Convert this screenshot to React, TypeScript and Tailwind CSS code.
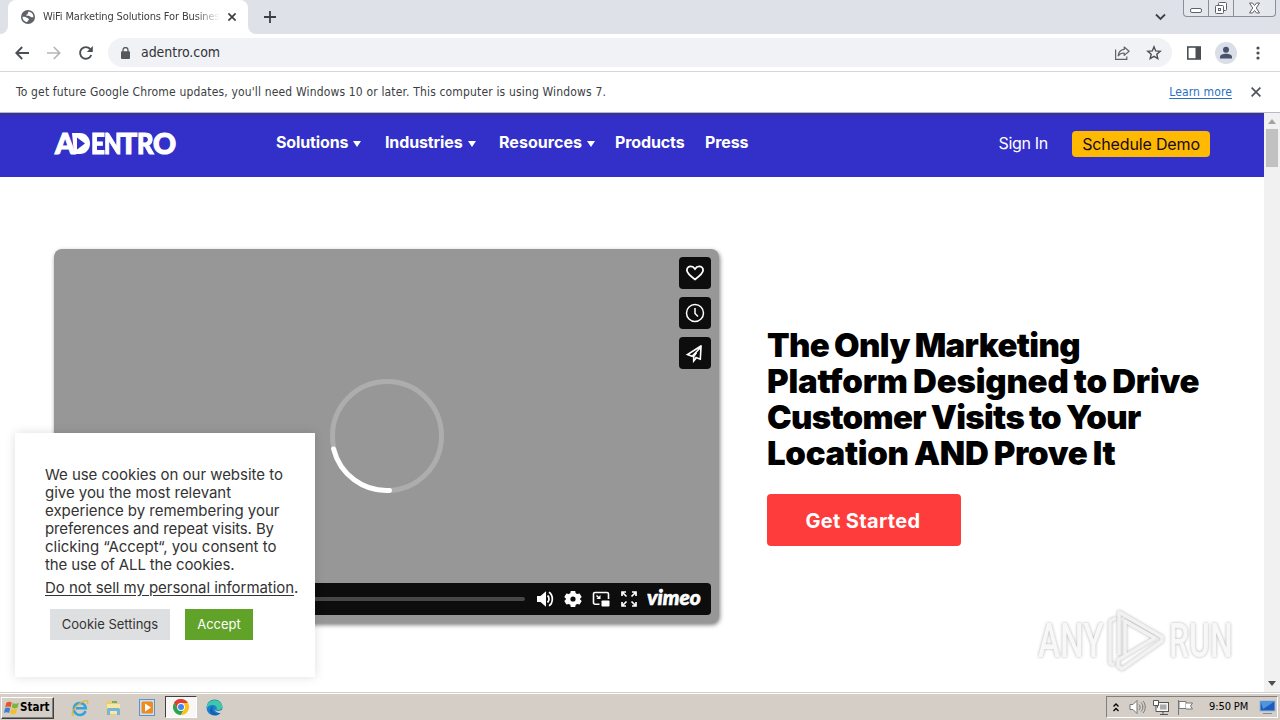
import React from "react";

const UI = "font-['DejaVu_Sans_Condensed','DejaVu_Sans',sans-serif]";

function Globe() {
  return (
    <svg className="size-[14px]" viewBox="0 0 14 14">
      <circle cx="7" cy="7" r="7" fill="#5f6368" />
      <path d="M1.600 6.800c1.500-.4 3.400.2 4.400.9.900.7 1.900.6 1.900 1.500 0 1-1.300 1.200-1.600 2.900C3.500 12 1.500 9.700 1.600 6.800z M7 1.600c.9.600-.2 1.300-.3 2.100-.1.900-1.400.6-1.500 1.500 0 .8 1.500.5 2.600.6 1.200.2 1.500 1.500 3 1.500.9 0 1.500-.3 1.600-.9C12.200 3.700 10 1.700 7 1.600z" fill="#fff" />
    </svg>
  );
}

function TabStrip() {
  return (
    <div className="flex h-[34px] shrink-0 bg-[#dee1e8]">
      <div className="w-[8px] bg-white">
        <div className="h-[34px] rounded-br-[8px] bg-[#dee1e8]" />
      </div>
      <div className="flex w-[240px] items-center rounded-t-[8px] bg-white pl-[13px]">
        <Globe />
        <div className={`ml-[8px] w-[177px] overflow-hidden whitespace-nowrap text-[11px] tracking-[-0.13px] text-[#3c4043] [mask-image:linear-gradient(to_right,#000_152px,transparent_177px)] ${UI}`}>
          WiFi Marketing Solutions For Business
        </div>
        <svg className="ml-[8px] size-[8px]" viewBox="0 0 8 8">
          <path d="M.4.400l7.200 7.200M7.600.400L.4 7.600" stroke="#3c4043" strokeWidth="1.700" />
        </svg>
      </div>
      <div className="w-[8px] bg-white">
        <div className="h-[34px] rounded-bl-[8px] bg-[#dee1e8]" />
      </div>
      <svg className="mt-[11px] ml-[8px] size-[12px]" viewBox="0 0 12 12">
        <path d="M6 0v12M0 6h12" stroke="#3c4043" strokeWidth="1.800" />
      </svg>
      <svg className="mt-[13px] ml-auto h-[8px] w-[11px]" viewBox="0 0 11 8">
        <path d="M1 1.500l4.500 4.500L10 1.500" fill="none" stroke="#3c4043" strokeWidth="1.800" />
      </svg>
      <div className="mr-[4px] ml-[17px] flex h-[17px] w-[93px] rounded-b-[4px] border border-t-0 border-[#8a8e98] bg-[#e4e7ec]">
        <div className="flex w-[25px] justify-center border-r border-[#8a8e98] pt-[8px]">
          <div className="h-[5px] w-[12px] rounded-[2px] border border-[#5c616c] bg-white" />
        </div>
        <div className="flex w-[25px] justify-center border-r border-[#8a8e98]">
          <svg className="mt-[1px] size-[14px]" viewBox="0 0 14 14" fill="#fff" stroke="#5c616c">
            <rect x="4.500" y="1.500" width="8" height="8" rx="1" />
            <rect x="1.500" y="4.500" width="8" height="8" rx="1" />
            <rect x="4.500" y="7.500" width="2" height="2" />
          </svg>
        </div>
        <div className="flex flex-1 justify-center">
          <svg className="mt-[2px] h-[12px] w-[13px]" viewBox="0 0 13 12">
            <path d="M1.500 1h3l2 2.500L8.500 1h3L8.300 6l3.200 5h-3l-2-2.500L4.500 11h-3l3.200-5z" fill="#fff" stroke="#5c616c" />
          </svg>
        </div>
      </div>
    </div>
  );
}

function Toolbar() {
  return (
    <div className="flex h-[38px] shrink-0 items-center border-b border-[#d5d7da] bg-white pl-[15px]">
      <svg className="size-[14px]" viewBox="0 0 14 14">
        <path d="M14 7H1.500M7.200 1L1.300 7l5.900 6" fill="none" stroke="#4b4f54" strokeWidth="1.900" />
      </svg>
      <svg className="ml-[18px] size-[14px]" viewBox="0 0 14 14">
        <path d="M0 7h12.500M6.800 1l5.900 6-5.900 6" fill="none" stroke="#b4b6b9" strokeWidth="1.700" />
      </svg>
      <svg className="ml-[17px] size-[16px]" viewBox="0 0 16 16">
        <path d="M13.300 10A5.800 5.800 0 1 1 12.300 4.200" fill="none" stroke="#4b4f54" strokeWidth="1.900" />
        <path d="M14.800 1v6H8.800z" fill="#4b4f54" />
      </svg>
      <div className="ml-[14px] flex h-[29px] w-[1064px] items-center rounded-full bg-[#f0f2f5] pr-[10px] pl-[13px]">
        <svg className="h-[12px] w-[9px]" viewBox="0 0 9 12">
          <rect y="4.300" width="9" height="7.700" rx="1" fill="#54585d" />
          <path d="M2 5V3a2.500 2.500 0 0 1 5 0v2" fill="none" stroke="#54585d" strokeWidth="1.300" />
        </svg>
        <div className={`ml-[11px] text-[14px] tracking-[-0.05px] text-[#303338] ${UI}`}>adentro.com</div>
        <svg className="ml-auto size-[16px]" viewBox="0 0 16 16" fill="none" stroke="#5f6368" strokeWidth="1.200">
          <path d="M1.600 4.500v9.900h11.200v-2.800" />
          <path d="M10.200 2l4.900 4.200-4.900 4.200V8C7.400 7.900 5.500 8.800 4.200 10.800 4.600 7.200 6.600 4.800 10.200 4.400z" strokeLinejoin="round" />
        </svg>
        <svg className="ml-[16px] size-[16px]" viewBox="0 0 16 16">
          <path d="M8 1.800l1.700 4.100 4.500.4-3.400 2.900 1 4.400L8 11.300l-3.800 2.300 1-4.400-3.400-2.900 4.500-.4z" fill="none" stroke="#4b4f54" strokeWidth="1.400" />
        </svg>
      </div>
      <svg className="ml-[15px] size-[14px]" viewBox="0 0 14 14">
        <rect x=".8" y="1" width="12.400" height="12" fill="none" stroke="#4b4f54" strokeWidth="1.600" />
        <rect x="8.500" y="1" width="5" height="12" fill="#4b4f54" />
      </svg>
      <svg className="ml-[14px] size-[22px]" viewBox="0 0 22 22">
        <circle cx="11" cy="11" r="11" fill="#dadee6" />
        <circle cx="11" cy="7.800" r="3" fill="#4a5270" />
        <path d="M5 16.500v-1.500c0-2 3-3.200 6-3.200s6 1.200 6 3.200v1.500z" fill="#4a5270" />
      </svg>
      <svg className="ml-[19px] h-[14px] w-[4px]" viewBox="0 0 4 14" fill="#4b4f54">
        <circle cx="2" cy="2" r="1.600" />
        <circle cx="2" cy="7" r="1.600" />
        <circle cx="2" cy="12" r="1.600" />
      </svg>
    </div>
  );
}

function InfoBar() {
  return (
    <div className={`flex h-[41px] shrink-0 items-center border-b border-[#b9bbc8] bg-white pl-[16px] text-[12px] ${UI}`}>
      <div className="whitespace-nowrap tracking-[0.16px] text-[#3c4043]">
        To get future Google Chrome updates, you&apos;ll need Windows 10 or later. This computer is using Windows 7.
      </div>
      <div className="ml-auto whitespace-nowrap tracking-[0.13px] text-[#2a6fc4] underline underline-offset-2">Learn more</div>
      <svg className="mr-[19px] ml-[19px] size-[10px]" viewBox="0 0 10 10">
        <path d="M.6.600l8.800 8.800M9.400.600L.6 9.400" stroke="#54585d" strokeWidth="1.800" />
      </svg>
    </div>
  );
}

function Caret() {
  return (
    <svg className="mt-[3px] ml-[5px] h-[6px] w-[8px]" viewBox="0 0 8 6">
      <path d="M0 0h8L4 6z" fill="#fff" />
    </svg>
  );
}

function SiteHeader() {
  return (
    <div className="flex h-[64px] shrink-0 items-center bg-[#3230c8] pb-[6px] pl-[54px] text-[16px] text-white shadow-[inset_0_3px_2px_-1px_#38368f]">
      <div className="relative mt-[2px] flex w-[222px] pl-[1px] font-[Lato,sans-serif] text-[28.500px] leading-[30px] font-black whitespace-nowrap [-webkit-text-stroke:1.100px_white]">
        <span className="w-[17px]">A</span>
        <span className="w-[19px] text-transparent [-webkit-text-stroke:0]">D</span>
        <span className="w-[13px] origin-left scale-x-[0.85]">E</span>
        <span className="w-[16px] origin-left scale-x-[0.8]">N</span>
        <span className="w-[17px]">T</span>
        <span className="w-[16px] origin-left scale-x-[0.9]">R</span>
        <span>O</span>
        <svg className="absolute top-[5px] left-[18px] h-[21px] w-[18px]" viewBox="0 0 18 21">
          <path d="M0 0h8c6 0 10 5 10 10.500S14 21 8 21H2z" fill="#fff" />
          <path d="M5 4.500l8 6-8 6z" fill="#3230c8" />
        </svg>
      </div>
      <div className="flex font-bold tracking-[-0.12px]">
        <div className="flex w-[109px] items-center">Solutions<Caret /></div>
        <div className="flex w-[114px] items-center">Industries<Caret /></div>
        <div className="flex w-[116px] items-center tracking-[0.05px]">Resources<Caret /></div>
        <div className="w-[90px]">Products</div>
        <div>Press</div>
      </div>
      <div className="mt-[2px] ml-auto tracking-[-0.3px]">Sign In</div>
      <div className="mt-[4px] mr-[54px] ml-[24px] flex h-[26px] w-[138px] items-center justify-center rounded-[4px] bg-[#ffb900] pb-[1px] whitespace-nowrap tracking-[-0.15px] text-[#160a20]">
        Schedule Demo
      </div>
    </div>
  );
}

function VideoPlayer() {
  const box = "flex size-[32px] items-center justify-center rounded-[4px] bg-[#0d0d0d]";
  return (
    <div className="flex h-[374px] w-[665px] flex-col rounded-[8px] bg-[#979797] p-[8px] shadow-[1px_2px_4px_rgba(0,0,0,0.5)]">
      <div className="flex h-[112px] flex-col justify-between self-end">
        <div className={box}>
          <svg className="size-[20px]" viewBox="0 0 20 20">
            <path d="M10 16.400C5 12.800 1.900 10.400 1.900 7.300c0-2.300 1.800-3.900 3.900-3.900 1.700 0 3.200.9 4.200 2.500 1-1.600 2.500-2.500 4.200-2.500 2.100 0 3.900 1.600 3.900 3.900 0 3.100-3.100 5.500-8.100 9.100z" fill="none" stroke="#fff" strokeWidth="1.800" />
          </svg>
        </div>
        <div className={box}>
          <svg className="size-[20px]" viewBox="0 0 20 20" fill="none" stroke="#fff" strokeWidth="1.500">
            <circle cx="10" cy="10" r="8.500" />
            <path d="M10 5v5.500l3 3" />
          </svg>
        </div>
        <div className={box}>
          <svg className="size-[20px]" viewBox="0 0 20 20" fill="none" stroke="#fff" strokeWidth="1.600">
            <path d="M16.300 2.800L2.500 11.500l4.700 1.700L16 4 15.300 16.200l-5-2" />
            <path d="M11.500 9.500l-2.800 4v4.500l2.500-3" />
          </svg>
        </div>
      </div>
      <svg className="mt-[9px] size-[116px] self-center" viewBox="0 0 116 116" fill="none" strokeWidth="5">
        <circle cx="58" cy="58" r="54.500" stroke="#adadad" />
        <path d="M4.600 71A54.500 54.500 0 0 0 60.500 112.400" stroke="#fff" strokeLinecap="round" />
      </svg>
      <div className="mt-[89px] flex h-[32px] shrink-0 items-center rounded-[4px] bg-[#0d0d0d] pr-[9px]">
        <div className="ml-[80px] h-[4px] w-[383px] rounded-full bg-[#474747]" />
        <svg className="ml-[11px] h-[18px] w-[19px]" viewBox="0 0 19 18">
          <path d="M1 6h3.500L10 1.200v15.600L4.500 12H1z" fill="#fff" />
          <path d="M11.500 5.500c2 1.800 2 5.200 0 7M13 2.200c4.400 2.700 4.400 10.900 0 13.600" fill="none" stroke="#fff" strokeWidth="1.700" />
        </svg>
        <svg className="ml-[9px] size-[18px]" viewBox="0 0 18 18">
          <path d="M6.800.9h4.400l.5 2.300 1.600.9 2.300-.7 2.100 3.700-1.700 1.600v.6l1.700 1.600-2.100 3.700-2.300-.7-1.600.9-.5 2.300H6.800l-.5-2.300-1.600-.9-2.300.7L.3 10.900 2 9.300v-.6L.3 7.100l2.100-3.700 2.300.7 1.600-.9z" fill="#fff" />
          <circle cx="9" cy="9" r="2.600" fill="#0d0d0d" />
        </svg>
        <svg className="ml-[10px] h-[16px] w-[18px]" viewBox="0 0 18 16">
          <path d="M7.500 13.200H3a1.500 1.500 0 0 1-1.500-1.500V3A1.500 1.500 0 0 1 3 1.500h12A1.500 1.500 0 0 1 16.500 3v5" fill="none" stroke="#fff" strokeWidth="1.600" />
          <rect x="9.500" y="9.500" width="8" height="6" rx=".8" fill="#fff" />
          <path d="M8.500 4v4H4.500z" fill="#fff" />
          <path d="M4.500 4.500l3 3" stroke="#fff" strokeWidth="1.400" />
        </svg>
        <svg className="ml-[11px] size-[16px]" viewBox="0 0 16 16" fill="none" stroke="#fff" strokeWidth="1.700">
          <path d="M1 5V1h4M11 1h4v4M15 11v4h-4M5 15H1v-4M1.500 1.500l4 4M14.500 1.500l-4 4M14.500 14.500l-4-4M1.500 14.500l4-4" />
        </svg>
        <div className="mt-[-4px] ml-[10px] font-[Lato,sans-serif] text-[21px] leading-[24px] font-black text-white italic [-webkit-text-stroke:0.6px_white]">vimeo</div>
      </div>
    </div>
  );
}

function Hero() {
  return (
    <div className="flex pt-[72px] pl-[54px]">
      <VideoPlayer />
      <div className="mt-[78px] ml-[48px]">
        <h1 className="text-[33px] leading-[36px] font-black whitespace-nowrap text-black [word-spacing:-1px]">
          <div className="tracking-[-0.65px]">The Only Marketing</div>
          <div className="tracking-[-0.22px]">Platform Designed to Drive</div>
          <div className="tracking-[-0.7px]">Customer Visits to Your</div>
          <div className="tracking-[-0.32px]">Location AND Prove It</div>
        </h1>
        <div className="mt-[23px] flex h-[52px] w-[194px] items-center justify-center rounded-[4px] bg-[#ff3c3c] pt-[2px] pr-[2px] text-[20px] font-bold tracking-[0.35px] text-white">
          Get Started
        </div>
      </div>
    </div>
  );
}

function CookieNotice() {
  return (
    <div className="absolute top-[320px] left-[15px] h-[244px] w-[300px] bg-white pt-[33px] pl-[30px] whitespace-nowrap text-[#333] shadow-[0_0_10px_rgba(0,0,0,0.13)]">
      <div className="text-[15px] leading-[18px] tracking-[-0.03px]">
        <div>We use cookies on our website to</div>
        <div>give you the most relevant</div>
        <div>experience by remembering your</div>
        <div className="tracking-[-0.13px]">preferences and repeat visits. By</div>
        <div>clicking “Accept“, you consent to</div>
        <div className="tracking-[-0.13px]">the use of ALL the cookies.</div>
        <div className="mt-[5px] tracking-[-0.05px]"><span className="underline underline-offset-2">Do not sell my personal information</span>.</div>
      </div>
      <div className="mt-[12px] ml-[5px] flex gap-[15px] text-[13px]">
        <div className="flex h-[31px] w-[120px] items-center justify-center bg-[#dedfe0]">Cookie Settings</div>
        <div className="flex h-[31px] w-[68px] items-center justify-center bg-[#61a229] text-white">Accept</div>
      </div>
    </div>
  );
}

function Watermark() {
  return (
    <div className="absolute top-[494px] left-[1038px] flex h-[68px] w-[200px] items-center text-[#f8f8f8] [filter:drop-shadow(0_0_1.5px_rgba(0,0,0,0.3))]">
      <div className="w-[68px]">
        <div className="origin-left scale-x-[0.68] font-[Roboto,sans-serif] text-[49px] leading-[68px] font-medium whitespace-nowrap">ANY</div>
      </div>
      <svg className="h-[64px] w-[62px]" viewBox="0 0 62 64" fill="none" stroke="#f2f2f2" strokeWidth="3.500" strokeLinejoin="round">
        <path d="M13 46V3l43 25v4L16 60l-4-3v-6l37-22L19 12v34" />
        <path d="M10 9l-6 3v42l4 2" />
      </svg>
      <div className="w-[66px]">
        <div className="ml-[1px] origin-left scale-x-[0.65] font-[Roboto,sans-serif] text-[49px] leading-[68px] font-medium whitespace-nowrap">RUN</div>
      </div>
    </div>
  );
}

function Scrollbar() {
  return (
    <div className="flex w-[16px] flex-col items-center bg-[#f1f1f1]">
      <svg className="mt-[6px] h-[5px] w-[8px]" viewBox="0 0 8 5"><path d="M0 5l4-5 4 5z" fill="#a3a3a3" /></svg>
      <div className="mt-[5px] h-[38px] w-[12px] bg-[#c1c1c1]" />
      <svg className="mt-auto mb-[6px] h-[5px] w-[8px]" viewBox="0 0 8 5"><path d="M0 0h8L4 5z" fill="#505050" /></svg>
    </div>
  );
}

function Taskbar() {
  return (
    <div className="flex h-[28px] shrink-0 items-center border-t border-[#d4d0c8] bg-[#d4cec6] shadow-[inset_0_1px_0_#fff]">
      <div className="ml-[1px] mt-[2px] flex h-[22px] w-[53px] items-center border border-t-white border-r-[#404040] border-b-[#404040] border-l-white pl-[2px] shadow-[inset_-1px_-1px_0_#808080]">
        <svg className="size-[16px]" viewBox="0 0 17 17">
          <path d="M2.500 3C4.500 1.500 6.500 1.600 8.300 2.700L7 7.800C5 6.700 3.200 6.700 1.200 7.900z" fill="#e8542a" />
          <path d="M9.300 3.200c2 1.100 4 1.100 6.500-.2l-1.400 5c-2.200 1.200-4.300 1.200-6.300.1z" fill="#7cb63c" />
          <path d="M1 8.900c2-1.200 3.800-1.100 5.700-.1l-1.300 5C3.500 12.700 1.800 12.800 0 13.900z" fill="#3f7fd0" />
          <path d="M7.800 9.200c2 1.100 4 1.100 6.300-.1l-1.400 5c-2.200 1.200-4.200 1.200-6.200.1z" fill="#f6bf26" />
        </svg>
        <div className={`text-[11.500px] font-bold text-black ${UI}`}>Start</div>
      </div>
      <svg className="mt-[2px] ml-[17px] size-[18px]" viewBox="0 0 18 18">
        <path d="M14.500 12A6 6 0 1 1 14.800 9.300H5" fill="none" stroke="#36a1dc" strokeWidth="2.500" />
        <path d="M3 16.500C-1.500 16 3 8 10 3.500 14 1 18 .5 16.500 5" fill="none" stroke="#e5b832" strokeWidth="1.300" />
      </svg>
      <svg className="mt-[2px] ml-[15px] size-[18px]" viewBox="0 0 18 18">
        <path d="M2 2h5l1 2h7v12H2z" fill="#e9cf74" />
        <path d="M3 5h13v10H3z" fill="#f6e7a6" />
        <path d="M3 16v-5.500C3 9.500 4 9 5 9h9c1 0 2 .5 2 1.500V16h-3v-4H6v4z" fill="#76b5d9" />
        <path d="M8 3h5" stroke="#5a9e4a" strokeWidth="1.500" />
      </svg>
      <svg className="mt-[2px] ml-[17px] size-[17px]" viewBox="0 0 17 17">
        <rect x=".5" y=".5" width="15" height="16" fill="#c8e1f5" stroke="#5b94c6" />
        <rect x="2.500" y="2.500" width="11.500" height="12" rx="1.500" fill="#f08a1c" />
        <path d="M6 4.500v8l6-4z" fill="#fff" />
      </svg>
      <div className="mt-[1px] ml-[9px] flex h-[22px] w-[32px] items-center justify-center border border-t-[#404040] border-r-white border-b-white border-l-[#404040] bg-[#f8f7f5]">
        <svg className="size-[16px]" viewBox="0 0 16 16">
          <path d="M8 8L1.070 4A8 8 0 0 1 14.930 4z" fill="#df4033" />
          <path d="M8 8V0A8 8 0 0 0 1.070 4L5 11z" fill="#df4033" />
          <path d="M1.070 4A8 8 0 0 0 8 16l3.200-6L5 10z" fill="#2fa14f" />
          <path d="M8 16A8 8 0 0 0 14.930 4H8l3.400 6z" fill="#fbc116" />
          <circle cx="8" cy="8" r="3.900" fill="#fff" />
          <circle cx="8" cy="8" r="3" fill="#4284f0" />
        </svg>
      </div>
      <svg className="mt-[2px] ml-[9px] size-[17px]" viewBox="0 0 17 17">
        <circle cx="8.500" cy="8.500" r="8" fill="#1780cf" />
        <path d="M1 6.500C3-.5 15-.8 16.500 7.500c.3 3-3 4-6 3.200.8-1.500.2-4-2.500-4.500C5 5.700 2.500 6.500 1 9z" fill="#3fc7a6" />
        <path d="M8 7c-2.500 1-2.500 6.500 3 7.500 2 .3 3.500-.6 4.300-1.500C12 18 5 17 4 12.500 3.500 9.500 5.500 7.500 8 7z" fill="#1660ae" />
        <path d="M9 8c-1 1.500.2 3.900 3 4 2 0 3.500-.5 4.500-1.700l.5 2.200-2 1.500C12 14.500 7.500 12 9 8z" fill="#d4cec6" />
      </svg>
      <div className="mt-[1px] mr-[2px] ml-auto flex h-[22px] w-[172px] items-center border border-t-[#808080] border-r-white border-b-white border-l-[#808080] pl-[6px]">
        <svg className="h-[9px] w-[6px]" viewBox="0 0 6 9" fill="none" stroke="#000" strokeWidth="1.300">
          <path d="M.5 3.500L3 1l2.500 2.500M.5 8L3 5.500 5.500 8" />
        </svg>
        <svg className="ml-[10px] h-[16px] w-[17px]" viewBox="0 0 17 16" stroke="#777">
          <path d="M1 5.500h3l4-4v13l-4-4H1z" fill="#fff" />
          <path d="M10 5.500c1.500 1.500 1.500 4 0 5.500M12 3.500c2.500 2.500 2.500 6.500 0 9M14 2c3 3.500 3 8.500 0 12" fill="none" />
        </svg>
        <svg className="ml-[7px] size-[17px]" viewBox="0 0 17 17" stroke="#555">
          <rect x="4.500" y="3.500" width="11" height="9" fill="#f5f5f5" />
          <rect x="7" y="5.500" width="6.500" height="5" fill="#aaa" stroke="none" />
          <path d="M7 15.500h8M10 13v2" />
          <path d="M.5 1.500h5v5h-5zM3 6.500v6h4" fill="#fff" />
        </svg>
        <svg className="ml-[7px] size-[17px]" viewBox="0 0 17 17" fill="#fff" stroke="#777">
          <path d="M1.500 1v15M2 2.500h7v7H2z" />
          <path d="M9 4h6.500l-2 3 2 3H9" />
        </svg>
        <div className={`ml-[15px] text-[11px] tracking-[-0.1px] whitespace-nowrap text-black ${UI}`}>9:50 PM</div>
        <svg className="ml-auto mr-[1px] h-[14px] w-[17px]" viewBox="0 0 17 14">
          <rect x="1" y="1" width="15" height="10" fill="#1c5cba" stroke="#9bb8dc" />
          <path d="M1.500 1.500h14L4 9z" fill="#4e94de" />
          <path d="M4 13.500h9" stroke="#7f8b99" />
        </svg>
      </div>
    </div>
  );
}

export default function App() {
  return (
    <div className="flex h-[720px] w-[1280px] flex-col overflow-hidden bg-white font-[Inter,sans-serif]">
      <TabStrip />
      <Toolbar />
      <InfoBar />
      <div className="relative flex min-h-0 flex-1">
        <div className="w-[1264px] overflow-hidden">
          <SiteHeader />
          <Hero />
        </div>
        <Scrollbar />
        <CookieNotice />
        <Watermark />
      </div>
      <Taskbar />
    </div>
  );
}
